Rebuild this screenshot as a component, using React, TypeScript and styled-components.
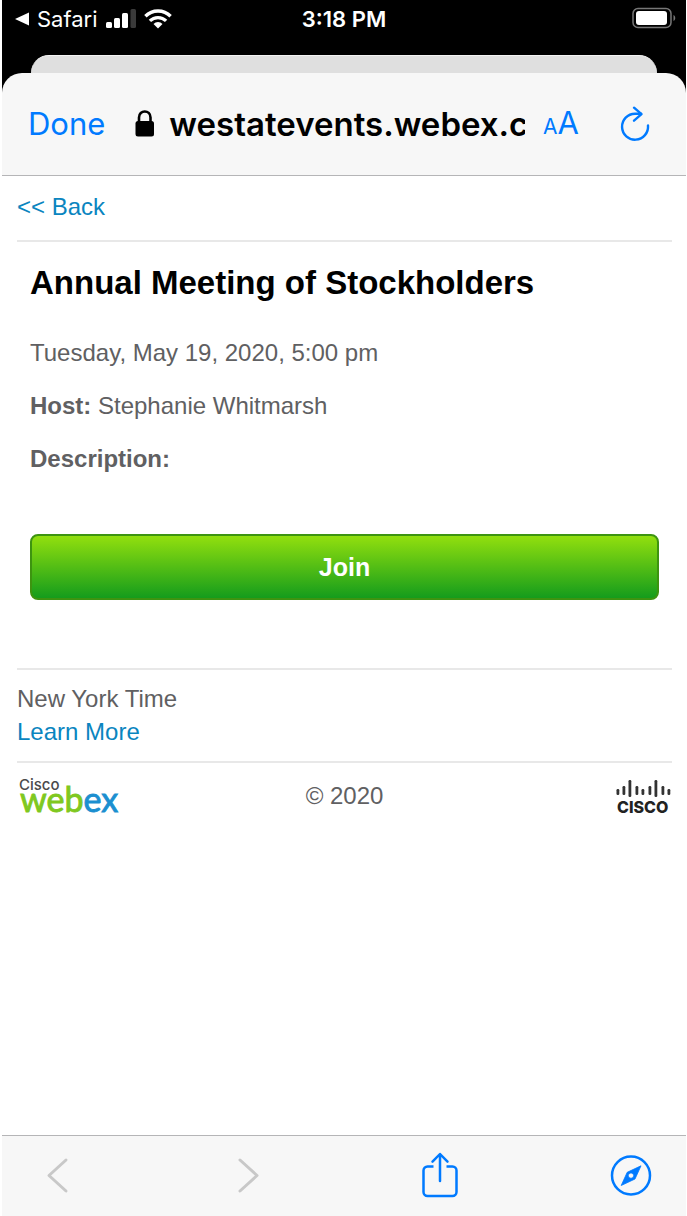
import React from "react";
import styled, { createGlobalStyle } from "styled-components";

const ui = `Inter, "Liberation Sans", sans-serif`;
const blue = "#007aff";
const linkBlue = "#0a85bf";
const gray = "#606062";

const GlobalStyle = createGlobalStyle`
  *, *::before, *::after { box-sizing: border-box; }
  body { margin: 0; background: #fff; }
  button { border: 0; padding: 0; background: none; font: inherit; cursor: pointer; }
  svg { display: block; overflow: visible; }
`;

const Screen = styled.div`
  min-height: 100vh;
  display: flex;
  flex-direction: column;
  padding: 0 1px 0 2px;
  font-family: "Liberation Sans", Arial, sans-serif;
  font-size: 24px;
  line-height: 33px;
  color: ${gray};
`;

const Top = styled.header`
  background: #000;
  font-family: ${ui};
`;

const StatusBar = styled.div`
  height: 55px;
  padding: 8px 10px 0;
  display: grid;
  grid-template-columns: 1fr auto 1fr;
  align-items: start;
  color: #fff;
  font-size: 22px;
  line-height: 22px;
`;

const StatusGroup = styled.div<{ $end?: boolean }>`
  display: flex;
  align-items: center;
  gap: 8px;
  justify-content: ${(p) => (p.$end ? "flex-end" : "flex-start")};
`;

const BackToApp = styled.button`
  display: flex;
  align-items: center;
  gap: 8px;
  padding-left: 3px;
  color: #fff;
`;

const Clock = styled.time`
  font-weight: 600;
`;

const SheetBehind = styled.div`
  height: 18px;
  margin: 0 29px;
  border-top: 1px solid #f4f4f4;
  border-radius: 18px 18px 0 0;
  background: #dfdfdf;
`;

const AddressBar = styled.div`
  height: 103px;
  display: flex;
  align-items: center;
  padding: 0 36px 0 26px;
  border-bottom: 1px solid #b5b5b7;
  border-radius: 20px 20px 0 0;
  background: #f7f7f7;
  color: ${blue};
`;

const DoneButton = styled.button`
  color: ${blue};
  font-size: 31px;
  line-height: 40px;
`;

const Address = styled.div`
  flex: 1;
  min-width: 0;
  display: flex;
  align-items: center;
  gap: 14px;
  margin: 0 18px 0 30px;
  color: #000;
`;

const Url = styled.span`
  flex: 1;
  min-width: 0;
  overflow: hidden;
  white-space: nowrap;
  font-size: 33px;
  line-height: 44px;
  font-weight: 600;
`;

const TextSize = styled.button`
  display: flex;
  align-items: baseline;
  padding-top: 2px;
  color: ${blue};
  font-size: 31px;
  line-height: 40px;
  margin-right: 42px;
`;

const SmallA = styled.span`
  font-size: 21px;
`;

const IconButton = styled.button`
  display: flex;
  justify-content: center;
  color: ${blue};
  &:disabled { color: #c8c8c8; cursor: default; }
`;

const Page = styled.main`
  flex: 1;
  padding: 0 14px 0 15px;
`;

const BackRow = styled.nav`
  padding: 14px 0 17px;
  border-bottom: 2px solid #e8e8e8;
`;

const Link = styled.a`
  color: ${linkBlue};
  text-decoration: none;
`;

const Event = styled.section`
  padding: 20px 13px 68px;
  border-bottom: 2px solid #e8e8e8;
`;

const Title = styled.h1`
  margin: 0 0 32px;
  color: #000;
  font-size: 33px;
  line-height: 42px;
`;

const Detail = styled.p`
  margin: 0 0 20px;
`;

const JoinButton = styled.button`
  display: block;
  width: 100%;
  height: 66px;
  margin-top: 59px;
  border: 2px solid #3d9410;
  border-radius: 8px;
  background: linear-gradient(#92df0e, #149c1c);
  color: #fff;
  font-size: 25px;
  font-weight: 700;
`;

const Locale = styled.section`
  display: flex;
  flex-direction: column;
  align-items: flex-start;
  padding: 12px 0 13px;
  border-bottom: 2px solid #e8e8e8;
`;

const Footer = styled.footer`
  display: grid;
  grid-template-columns: 1fr auto 1fr;
  align-items: center;
  padding-top: 12px;
`;

const LogoCell = styled.div<{ $end?: boolean }>`
  display: flex;
  justify-content: ${(p) => (p.$end ? "flex-end" : "flex-start")};
`;

const Toolbar = styled.nav`
  height: 81px;
  display: flex;
  align-items: center;
  justify-content: space-between;
  padding: 0 34px 0 35px;
  border-top: 1px solid #b5b5b7;
  background: #f7f7f7;

  ${IconButton} { width: 42px; }
`;

function Signal() {
  return (
    <svg width="30" height="20" viewBox="0 0 30 20" aria-hidden="true">
      <rect x="0" y="13" width="6" height="6" rx="1.5" fill="#fff" />
      <rect x="8" y="9" width="6" height="10" rx="1.5" fill="#fff" />
      <rect x="16" y="4" width="6" height="15" rx="1.5" fill="#fff" />
      <rect x="24.500" y="0" width="5.500" height="19" rx="1.500" fill="#3a3a3a" />
    </svg>
  );
}

function Wifi() {
  return (
    <svg width="28" height="20" viewBox="0 0 28 20" fill="none" stroke="#fff" aria-hidden="true">
      <path d="M1.400 7.300a17.800 17.800 0 0 1 25.200 0" strokeWidth="3.400" />
      <path d="M5.900 11.900a11.500 11.500 0 0 1 16.200 0" strokeWidth="3.300" />
      <path d="M14 19.500l-4.500-4.600a6.400 6.400 0 0 1 9 0z" fill="#fff" stroke="none" />
    </svg>
  );
}

function Battery() {
  return (
    <svg width="44" height="22" viewBox="0 0 44 22" aria-hidden="true">
      <rect x="1" y="0.500" width="38" height="19" rx="5" fill="none" stroke="#777" strokeWidth="1.500" />
      <rect x="4" y="3" width="31" height="14" rx="3" fill="#fff" />
      <path d="M41.500 7c2.300 1 2.300 5 0 6z" fill="#777" />
    </svg>
  );
}

function Lock() {
  return (
    <svg width="20" height="28" viewBox="0 0 20 28" aria-hidden="true">
      <rect x="0.500" y="11" width="18.500" height="15.500" rx="2.500" />
      <path d="M4 12V7.500c0-8 11.500-8 11.500 0V12" fill="none" stroke="#000" strokeWidth="2.600" />
    </svg>
  );
}

function Reload() {
  return (
    <svg width="29" height="34" viewBox="0 0 29 34" fill="none" stroke="currentColor" strokeWidth="2.400" strokeLinecap="round" strokeLinejoin="round" aria-hidden="true">
      <path d="M27 18.500A13 13 0 1 1 14 6.700h6" />
      <path d="M13 0.700L20.500 7.200l-7.500 6.500" />
    </svg>
  );
}

function Chevron({ forward }: { forward?: boolean }) {
  return (
    <svg width="24" height="36" viewBox="0 0 24 36" fill="none" stroke="currentColor" strokeWidth="3" strokeLinecap="round" strokeLinejoin="round" aria-hidden="true">
      <path d={forward ? "M3 2L20 17.500L3 33" : "M20 2L3 17.500L20 33"} />
    </svg>
  );
}

function Share() {
  return (
    <svg width="36" height="46" viewBox="0 0 36 46" fill="none" stroke="currentColor" strokeWidth="2.500" strokeLinecap="round" strokeLinejoin="round" aria-hidden="true">
      <path d="M11.500 13.500H5.500a4 4 0 0 0-4 4V39a4 4 0 0 0 4 4h25a4 4 0 0 0 4-4V17.500a4 4 0 0 0-4-4h-6" strokeLinecap="butt" />
      <path d="M18 28V1.500M10.500 8.700L18 1l7.500 7.700" />
    </svg>
  );
}

function Compass() {
  return (
    <svg width="42" height="42" viewBox="0 0 42 42" aria-hidden="true">
      <circle cx="21" cy="20.500" r="19" fill="none" stroke="currentColor" strokeWidth="2.500" />
      <path fill="currentColor" fillRule="evenodd" d="M31 10.800L25 24L11.200 30.500L17.200 17.300zM21 17.900a2.700 2.700 0 1 0 0 5.400a2.700 2.700 0 0 0 0-5.400z" stroke="currentColor" strokeWidth="0.800" strokeLinejoin="round" />
    </svg>
  );
}

function WebexLogo() {
  return (
    <svg width="104" height="40" viewBox="0 0 104 40" role="img" aria-label="Cisco webex">
      <text x="2" y="15" fontFamily={ui} fontSize="15" fontWeight="500" fill="#4a4a4c">Cisco</text>
      <g fontFamily="Lato, sans-serif" fontSize="34" strokeWidth="0.900">
        <text x="3" y="37" fill="#7fc820" stroke="#7fc820">
          web<tspan fill="#1b8fd0" stroke="#1b8fd0">ex</tspan>
        </text>
      </g>
    </svg>
  );
}

const bars = [
  [0, 9, 6], [6, 6, 9], [12, 0, 17], [19, 6, 9], [25, 9, 6],
  [32, 6, 9], [38, 0, 17], [45, 6, 9], [51, 9, 6],
];

function CiscoLogo() {
  return (
    <svg width="56" height="40" viewBox="0 0 56 40" role="img" aria-label="Cisco">
      {bars.map(([x, y, h]) => (
        <rect key={x} x={x + 0.5} y={y + 5} width="2.800" height={h} rx="1.200" fill="#333" />
      ))}
      <text x="1" y="38" fontFamily={ui} fontSize="16" fontWeight="800" fill="#222">CISCO</text>
    </svg>
  );
}

export default function App() {
  return (
    <Screen>
      <GlobalStyle />
      <Top>
        <StatusBar>
          <StatusGroup>
            <BackToApp>
              <svg width="14" height="14" viewBox="0 0 14 14" fill="#fff" aria-hidden="true">
                <path d="M0 7L14 0.500V13.500z" />
              </svg>
              Safari
            </BackToApp>
            <Signal />
            <Wifi />
          </StatusGroup>
          <Clock>3:18 PM</Clock>
          <StatusGroup $end>
            <Battery />
          </StatusGroup>
        </StatusBar>
        <SheetBehind />
        <AddressBar>
          <DoneButton>Done</DoneButton>
          <Address>
            <Lock />
            <Url>westatevents.webex.c</Url>
          </Address>
          <TextSize aria-label="Text size">
            <SmallA>A</SmallA>A
          </TextSize>
          <IconButton aria-label="Reload"><Reload /></IconButton>
        </AddressBar>
      </Top>
      <Page>
        <BackRow><Link href="#back">&lt;&lt; Back</Link></BackRow>
        <Event>
          <Title>Annual Meeting of Stockholders</Title>
          <Detail>Tuesday, May 19, 2020, 5:00 pm</Detail>
          <Detail><b>Host:</b> Stephanie Whitmarsh</Detail>
          <Detail><b>Description:</b></Detail>
          <JoinButton>Join</JoinButton>
        </Event>
        <Locale>
          <span>New York Time</span>
          <Link href="#learn-more">Learn More</Link>
        </Locale>
        <Footer>
          <LogoCell><WebexLogo /></LogoCell>
          <span>© 2020</span>
          <LogoCell $end><CiscoLogo /></LogoCell>
        </Footer>
      </Page>
      <Toolbar>
        <IconButton aria-label="Previous page" disabled><Chevron /></IconButton>
        <IconButton aria-label="Next page" disabled><Chevron forward /></IconButton>
        <IconButton aria-label="Share"><Share /></IconButton>
        <IconButton aria-label="Open in Safari"><Compass /></IconButton>
      </Toolbar>
    </Screen>
  );
}
